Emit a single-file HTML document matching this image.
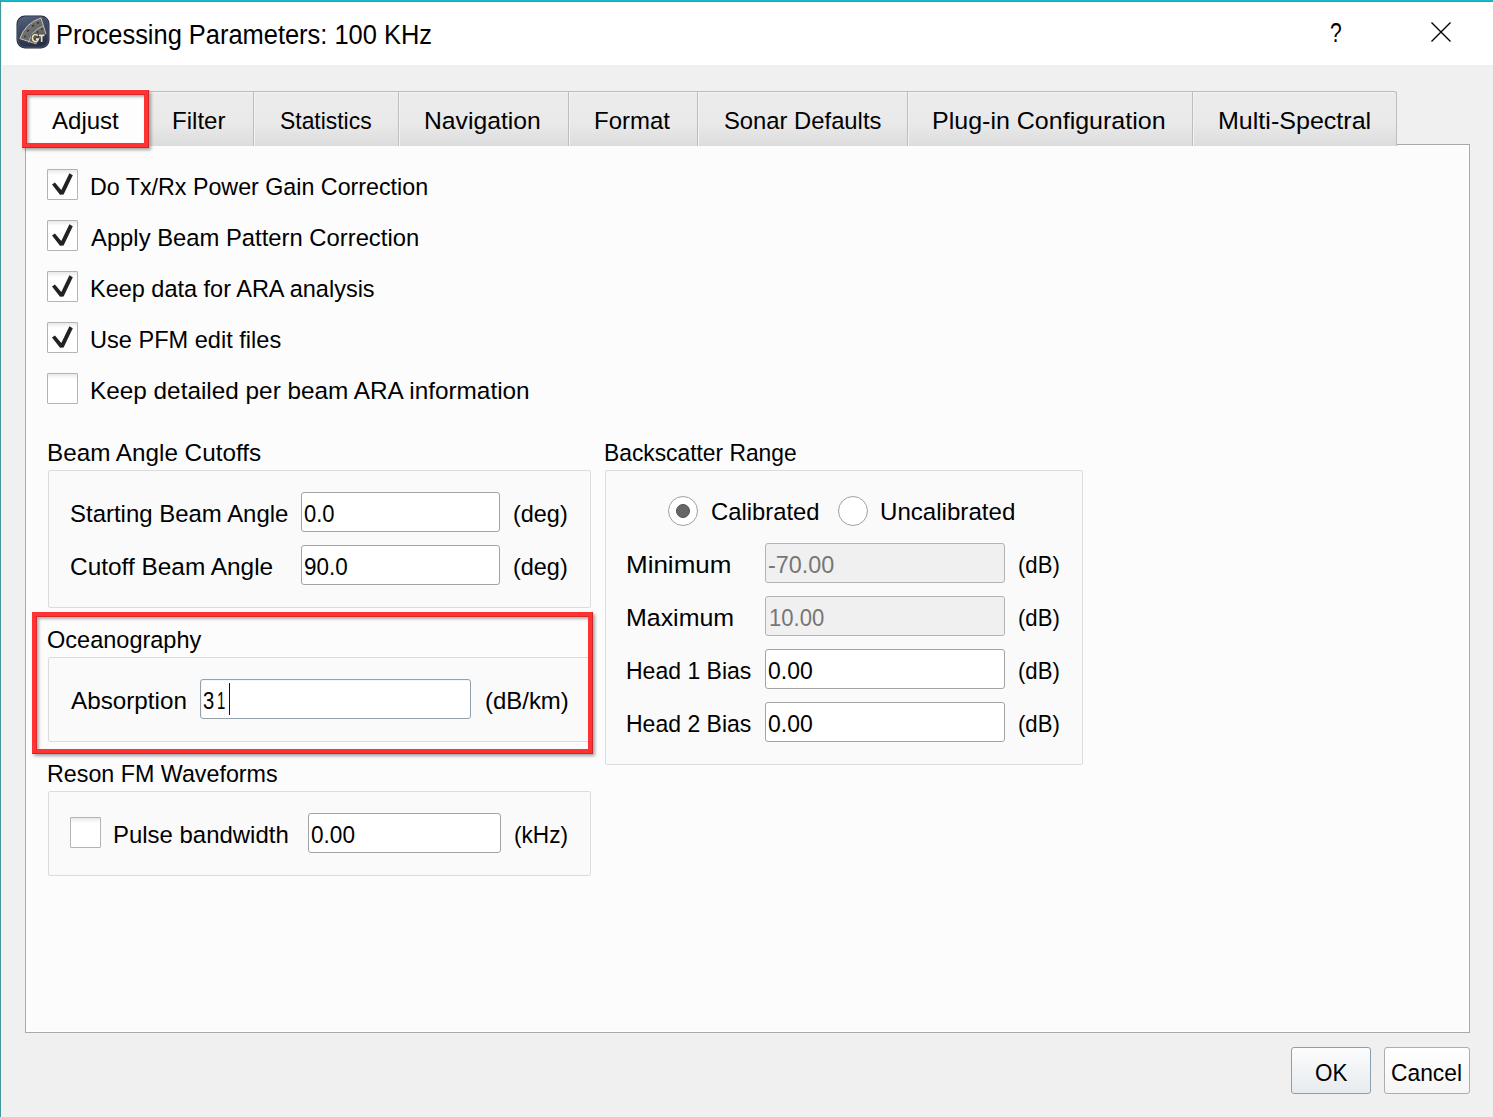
<!DOCTYPE html><html><head><meta charset="utf-8"><style>
html,body{margin:0;padding:0}
body{width:1493px;height:1117px;overflow:hidden;background:#f0f0f0;position:relative;font-family:"Liberation Sans",sans-serif}
div{box-sizing:border-box}
.t{position:absolute;white-space:pre;transform-origin:0 0;color:#000}
.tab{position:absolute;background:linear-gradient(#ececec,#e9e9e9 60%,#dcdcdc);border-left:1px solid #bdbdbd;border-top:1px solid #bdbdbd;box-shadow:inset 1px 1px 0 #f3f3f3}
.grp{position:absolute;background:#fafafa;border:1px solid #dcdcdc;border-radius:2px}
.cb{position:absolute;background:linear-gradient(#e9e9e9,#fff 5px);border:1px solid #b4b4b4;border-radius:1px}
.inp{position:absolute;background:#fff;border:1px solid #a3a3a3;border-radius:3px}
.dis{background:#f0f0f0;border-color:#b3b3b3}
.rad{position:absolute;background:#fff;border:1px solid #a0a0a0;border-radius:50%}
.btn{position:absolute;border:1px solid #adadad;border-radius:3px}
.redin{position:absolute;border-top:1px solid rgba(90,0,0,.22);border-left:1px solid rgba(90,0,0,.22)}
.redout{position:absolute;border-right:1px solid rgba(60,0,0,.25);border-bottom:1px solid rgba(60,0,0,.25)}
.red{position:absolute;border:5px solid #ff3333;box-shadow:2px 2px 3px rgba(0,0,0,.35), inset 2px 2px 3px rgba(0,0,0,.3)}
</style></head><body>
<div style="position:absolute;left:0;top:0;width:1493px;height:65px;background:#fff"></div>
<div style="position:absolute;left:0;top:0;width:1493px;height:1px;background:#17b8c8"></div>
<div style="position:absolute;left:0;top:1px;width:1493px;height:1px;background:#25a8b5"></div>
<div style="position:absolute;left:0;top:0;width:1px;height:1117px;background:#44979b"></div>
<div style="position:absolute;left:1px;top:2px;width:1px;height:1115px;background:#d0ffff"></div>
<svg style="position:absolute;left:16px;top:15px" width="34" height="34" viewBox="0 0 34 34">
<defs><linearGradient id="ig" x1="0" y1="0" x2="0.3" y2="1"><stop offset="0" stop-color="#56627b"/><stop offset="0.5" stop-color="#3c4762"/><stop offset="1" stop-color="#28314a"/></linearGradient>
<linearGradient id="fg" x1="0" y1="0" x2="1" y2="1"><stop offset="0" stop-color="#7c7c7c"/><stop offset="1" stop-color="#5c5c5c"/></linearGradient></defs>
<rect x="0.5" y="0.5" width="33" height="33" rx="8.5" fill="#1f2536"/>
<rect x="1.8" y="1.8" width="30.4" height="30.4" rx="7.2" fill="url(#ig)" stroke="#5d6884" stroke-width="0.7"/>
<path d="M3.9 23.6 A32.5 32.5 0 0 1 25 3 L30 19 A15.7 15.7 0 0 0 20 28.8 Z" fill="url(#fg)" stroke="#d9cfaa" stroke-width="0.9"/>
<path d="M12.5 27.7 A23.5 23.5 0 0 1 26.8 11.2" fill="none" stroke="#c9c9c9" stroke-width="0.8"/>
<g fill="#333"><rect x="11" y="15" width="2.2" height="1.6" transform="rotate(-35 12 16)"/><rect x="16" y="10" width="2.2" height="1.6" transform="rotate(-25 17 11)"/><rect x="21" y="7" width="2" height="1.6"/><circle cx="21.5" cy="17" r="1"/><circle cx="26" cy="14" r="0.9"/><circle cx="9" cy="21.5" r="0.9"/><circle cx="16" cy="21" r="0.8"/></g>
<g fill="none" stroke="#1f2536" stroke-width="3.2" stroke-linecap="square" opacity="0.55"><path d="M21.8 20.9 A3 3.6 0 1 0 22.3 24.1 L19.9 24.1"/><path d="M22.9 20.3 H28.4 M25.65 20.3 V26.9"/></g>
<g fill="none" stroke="#efe3b8" stroke-width="1.7"><path d="M21.8 20.9 A3 3.6 0 1 0 22.3 24.1 L19.9 24.1"/><path d="M22.9 20.3 H28.4 M25.65 20.3 V27"/></g>
</svg>
<svg style="position:absolute;left:1431px;top:22px" width="20" height="20" viewBox="0 0 20 20"><path d="M0.5 0.5 L19.5 19.5 M19.5 0.5 L0.5 19.5" stroke="#000" stroke-width="1.4"/></svg>
<div class="t" style="left:1329.5px;top:15px;font-size:27px;line-height:36px;transform:scaleX(0.78)">?</div>
<div style="position:absolute;left:25px;top:144px;width:1445px;height:889px;background:#fcfcfc;border:1px solid #a9a9a9;box-shadow:inset 1px 1px 0 #fff,inset -1px -1px 0 #fff"></div>
<div class="tab" style="left:148px;top:91px;width:105px;height:55px;"></div>
<div class="tab" style="left:253px;top:91px;width:145px;height:55px;"></div>
<div class="tab" style="left:398px;top:91px;width:170px;height:55px;"></div>
<div class="tab" style="left:568px;top:91px;width:129px;height:55px;"></div>
<div class="tab" style="left:697px;top:91px;width:210px;height:55px;"></div>
<div class="tab" style="left:907px;top:91px;width:285px;height:55px;"></div>
<div class="tab" style="left:1192px;top:91px;width:205px;height:55px;border-right:1px solid #bdbdbd;border-top-right-radius:3px;"></div>
<div style="position:absolute;left:25px;top:89px;width:124px;height:58px;background:#fdfdfd"></div>
<div class="grp" style="left:48px;top:470px;width:543px;height:138px;"></div>
<div class="grp" style="left:605px;top:470px;width:478px;height:295px;"></div>
<div class="grp" style="left:48px;top:657px;width:543px;height:85px;"></div>
<div class="grp" style="left:48px;top:791px;width:543px;height:85px;"></div>
<div class="cb" style="left:47px;top:169px;width:31px;height:31px;"></div>
<svg style="position:absolute;left:47px;top:169px" width="31" height="31" viewBox="0 0 31 31"><path d="M5 15.4 L7.9 13.4 L14.3 21 L22.4 4.3 L25.8 6.3 L16.6 25.5 L13 25.8 Z" fill="#222"/></svg>
<div class="cb" style="left:47px;top:220px;width:31px;height:31px;"></div>
<svg style="position:absolute;left:47px;top:220px" width="31" height="31" viewBox="0 0 31 31"><path d="M5 15.4 L7.9 13.4 L14.3 21 L22.4 4.3 L25.8 6.3 L16.6 25.5 L13 25.8 Z" fill="#222"/></svg>
<div class="cb" style="left:47px;top:271px;width:31px;height:31px;"></div>
<svg style="position:absolute;left:47px;top:271px" width="31" height="31" viewBox="0 0 31 31"><path d="M5 15.4 L7.9 13.4 L14.3 21 L22.4 4.3 L25.8 6.3 L16.6 25.5 L13 25.8 Z" fill="#222"/></svg>
<div class="cb" style="left:47px;top:322px;width:31px;height:31px;"></div>
<svg style="position:absolute;left:47px;top:322px" width="31" height="31" viewBox="0 0 31 31"><path d="M5 15.4 L7.9 13.4 L14.3 21 L22.4 4.3 L25.8 6.3 L16.6 25.5 L13 25.8 Z" fill="#222"/></svg>
<div class="cb" style="left:47px;top:373px;width:31px;height:31px;"></div>
<div class="cb" style="left:70px;top:817px;width:31px;height:31px;"></div>
<div class="inp" style="left:301px;top:492px;width:199px;height:40px;"></div>
<div class="inp" style="left:301px;top:545px;width:199px;height:40px;"></div>
<div class="inp" style="left:308px;top:813px;width:193px;height:40px;"></div>
<div class="inp" style="left:765px;top:649px;width:240px;height:40px;"></div>
<div class="inp" style="left:765px;top:702px;width:240px;height:40px;"></div>
<div class="inp" style="left:200px;top:679px;width:271px;height:40px;border-color:#94a1ab;box-shadow:inset 1px 1px 0 #eef8ff"></div>
<div class="inp dis" style="left:765px;top:543px;width:240px;height:40px;"></div>
<div class="inp dis" style="left:765px;top:596px;width:240px;height:40px;"></div>
<div style="position:absolute;left:229px;top:683px;width:1px;height:32px;background:#111"></div>
<div class="rad" style="left:668px;top:496px;width:30px;height:30px;"></div>
<div style="position:absolute;left:676px;top:504px;width:14px;height:14px;border-radius:50%;background:#666;border:1px solid #505050"></div>
<div class="rad" style="left:838px;top:496px;width:30px;height:30px;"></div>
<div class="btn" style="left:1291px;top:1047px;width:80px;height:47px;border-color:#8aa0b0;background:linear-gradient(#fcfdfd,#e6ebee)"></div>
<div class="btn" style="left:1384px;top:1047px;width:86px;height:47px;border-color:#adadad;background:linear-gradient(#ffffff,#f5f5f5)"></div>
<div class="red" style="left:22px;top:90px;width:127px;height:58px;"></div>
<div class="red" style="left:32px;top:612px;width:561px;height:142px;"></div>
<div class="redin" style="left:26px;top:94px;width:119px;height:50px;"></div>
<div class="redout" style="left:22px;top:90px;width:127px;height:58px;"></div>
<div class="redin" style="left:36px;top:616px;width:553px;height:134px;"></div>
<div class="redout" style="left:32px;top:612px;width:561px;height:142px;"></div>
<div class="t" style="left:56.12px;top:14.50px;font-size:27px;line-height:40px;transform:scaleX(0.9419);color:#000">Processing Parameters: 100 KHz</div>
<div class="t" style="left:52.00px;top:103.00px;font-size:24.5px;line-height:36px;transform:scaleX(0.9809);color:#000">Adjust</div>
<div class="t" style="left:172.33px;top:103.00px;font-size:24.5px;line-height:36px;transform:scaleX(0.9827);color:#000">Filter</div>
<div class="t" style="left:279.77px;top:103.00px;font-size:24.5px;line-height:36px;transform:scaleX(0.9344);color:#000">Statistics</div>
<div class="t" style="left:423.98px;top:103.00px;font-size:24.5px;line-height:36px;transform:scaleX(1.0088);color:#000">Navigation</div>
<div class="t" style="left:593.74px;top:103.00px;font-size:24.5px;line-height:36px;transform:scaleX(0.9776);color:#000">Format</div>
<div class="t" style="left:723.63px;top:103.00px;font-size:24.5px;line-height:36px;transform:scaleX(0.9712);color:#000">Sonar Defaults</div>
<div class="t" style="left:931.96px;top:103.00px;font-size:24.5px;line-height:36px;transform:scaleX(1.0208);color:#000">Plug-in Configuration</div>
<div class="t" style="left:1217.65px;top:103.00px;font-size:24.5px;line-height:36px;transform:scaleX(1.0226);color:#000">Multi-Spectral</div>
<div class="t" style="left:90.10px;top:169.00px;font-size:24.5px;line-height:36px;transform:scaleX(0.9490);color:#000">Do Tx/Rx Power Gain Correction</div>
<div class="t" style="left:90.50px;top:220.00px;font-size:24.5px;line-height:36px;transform:scaleX(0.9717);color:#000">Apply Beam Pattern Correction</div>
<div class="t" style="left:89.68px;top:271.00px;font-size:24.5px;line-height:36px;transform:scaleX(0.9585);color:#000">Keep data for ARA analysis</div>
<div class="t" style="left:89.68px;top:322.00px;font-size:24.5px;line-height:36px;transform:scaleX(0.9617);color:#000">Use PFM edit files</div>
<div class="t" style="left:89.61px;top:373.00px;font-size:24.5px;line-height:36px;transform:scaleX(0.9932);color:#000">Keep detailed per beam ARA information</div>
<div class="t" style="left:46.52px;top:435.00px;font-size:24.5px;line-height:36px;transform:scaleX(0.9906);color:#000">Beam Angle Cutoffs</div>
<div class="t" style="left:604.34px;top:435.00px;font-size:24.5px;line-height:36px;transform:scaleX(0.9304);color:#000">Backscatter Range</div>
<div class="t" style="left:47.34px;top:622.00px;font-size:24.5px;line-height:36px;transform:scaleX(0.9600);color:#000">Oceanography</div>
<div class="t" style="left:47.10px;top:756.00px;font-size:24.5px;line-height:36px;transform:scaleX(0.9500);color:#000">Reson FM Waveforms</div>
<div class="t" style="left:70.02px;top:496.00px;font-size:24.5px;line-height:36px;transform:scaleX(0.9778);color:#000">Starting Beam Angle</div>
<div class="t" style="left:70.00px;top:549.00px;font-size:24.5px;line-height:36px;transform:scaleX(0.9965);color:#000">Cutoff Beam Angle</div>
<div class="t" style="left:513.24px;top:496.00px;font-size:24.5px;line-height:36px;transform:scaleX(0.9564);color:#000">(deg)</div>
<div class="t" style="left:513.24px;top:549.00px;font-size:24.5px;line-height:36px;transform:scaleX(0.9564);color:#000">(deg)</div>
<div class="t" style="left:304.10px;top:495.50px;font-size:24.5px;line-height:36px;transform:scaleX(0.8969);color:#000">0.0</div>
<div class="t" style="left:304.08px;top:548.50px;font-size:24.5px;line-height:36px;transform:scaleX(0.9152);color:#000">90.0</div>
<div class="t" style="left:71.00px;top:683.00px;font-size:24.5px;line-height:36px;transform:scaleX(0.9897);color:#000">Absorption</div>
<div class="t" style="left:203.38px;top:683.00px;font-size:24.5px;line-height:36px;transform:scaleX(0.8250);color:#000">3</div>
<div class="t" style="left:217.18px;top:683.00px;font-size:24.5px;line-height:36px;transform:scaleX(0.6091);color:#000">1</div>
<div class="t" style="left:484.52px;top:683.00px;font-size:24.5px;line-height:36px;transform:scaleX(0.9771);color:#000">(dB/km)</div>
<div class="t" style="left:112.85px;top:817.00px;font-size:24.5px;line-height:36px;transform:scaleX(0.9774);color:#000">Pulse bandwidth</div>
<div class="t" style="left:310.58px;top:817.00px;font-size:24.5px;line-height:36px;transform:scaleX(0.9217);color:#000">0.00</div>
<div class="t" style="left:514.18px;top:817.00px;font-size:24.5px;line-height:36px;transform:scaleX(0.9232);color:#000">(kHz)</div>
<div class="t" style="left:711.03px;top:494.20px;font-size:24.5px;line-height:36px;transform:scaleX(0.9725);color:#000">Calibrated</div>
<div class="t" style="left:880.23px;top:494.20px;font-size:24.5px;line-height:36px;transform:scaleX(0.9836);color:#000">Uncalibrated</div>
<div class="t" style="left:626.08px;top:547.30px;font-size:24.5px;line-height:36px;transform:scaleX(1.0604);color:#000">Minimum</div>
<div class="t" style="left:626.17px;top:600.00px;font-size:24.5px;line-height:36px;transform:scaleX(1.0175);color:#000">Maximum</div>
<div class="t" style="left:626.42px;top:653.10px;font-size:24.5px;line-height:36px;transform:scaleX(0.9389);color:#000">Head 1 Bias</div>
<div class="t" style="left:626.42px;top:706.00px;font-size:24.5px;line-height:36px;transform:scaleX(0.9389);color:#000">Head 2 Bias</div>
<div class="t" style="left:768.45px;top:547.30px;font-size:24.5px;line-height:36px;transform:scaleX(0.9544);color:#767676">-70.00</div>
<div class="t" style="left:769.00px;top:600.00px;font-size:24.5px;line-height:36px;transform:scaleX(0.9017);color:#767676">10.00</div>
<div class="t" style="left:767.56px;top:653.10px;font-size:24.5px;line-height:36px;transform:scaleX(0.9370);color:#000">0.00</div>
<div class="t" style="left:767.56px;top:706.00px;font-size:24.5px;line-height:36px;transform:scaleX(0.9370);color:#000">0.00</div>
<div class="t" style="left:1018.20px;top:547.30px;font-size:24.5px;line-height:36px;transform:scaleX(0.9023);color:#000">(dB)</div>
<div class="t" style="left:1018.20px;top:600.00px;font-size:24.5px;line-height:36px;transform:scaleX(0.9023);color:#000">(dB)</div>
<div class="t" style="left:1018.20px;top:653.10px;font-size:24.5px;line-height:36px;transform:scaleX(0.9023);color:#000">(dB)</div>
<div class="t" style="left:1018.20px;top:706.00px;font-size:24.5px;line-height:36px;transform:scaleX(0.9023);color:#000">(dB)</div>
<div class="t" style="left:1314.99px;top:1055.00px;font-size:24.5px;line-height:36px;transform:scaleX(0.9147);color:#000">OK</div>
<div class="t" style="left:1390.97px;top:1055.00px;font-size:24.5px;line-height:36px;transform:scaleX(0.9311);color:#000">Cancel</div>
</body></html>
